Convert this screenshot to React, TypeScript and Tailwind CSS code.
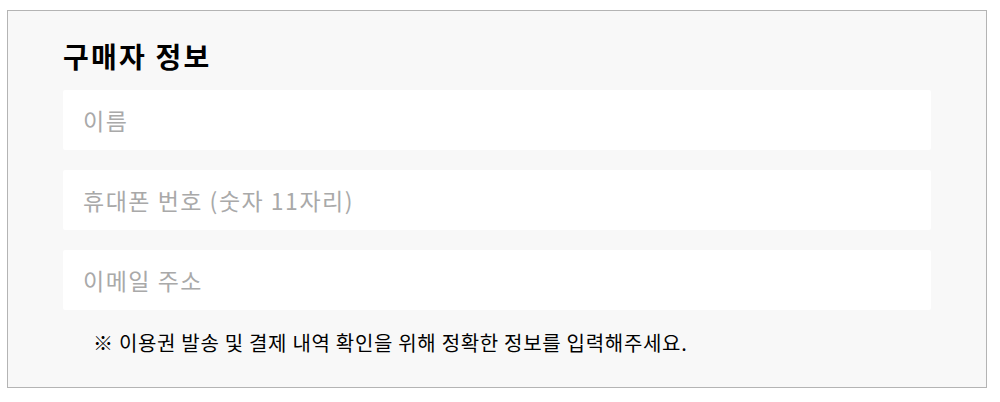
const fields = ['이름', '휴대폰 번호 (숫자 11자리)', '이메일 주소'];

export default function App() {
  return (
    <div className="min-h-[402px] bg-white pt-[10px] pl-[7px] font-['Noto_Sans_CJK_KR','Noto_Sans',sans-serif]">
      <div className="w-[980px] h-[378px] border border-[#b4b4b4] bg-[#f8f8f8] px-[55px] pt-[24px]">
        <h2 className="text-[28px] font-bold leading-[42px] text-black tracking-[2.2px]">구매자 정보</h2>
        <div className="mt-[13px] flex flex-col gap-5">
          {fields.map((f) => (
            <input
              key={f}
              placeholder={f}
              className="h-[60px] w-full rounded-[2px] bg-white px-5 text-[23px] tracking-[1.5px] outline-none placeholder:text-[#a9a9a9]"
            />
          ))}
        </div>
        <p className="mt-[19px] pl-[30px] text-[20px] leading-[28px] tracking-[0.7px] text-black">
          ※ 이용권 발송 및 결제 내역 확인을 위해 정확한 정보를 입력해주세요.
        </p>
      </div>
    </div>
  );
}
